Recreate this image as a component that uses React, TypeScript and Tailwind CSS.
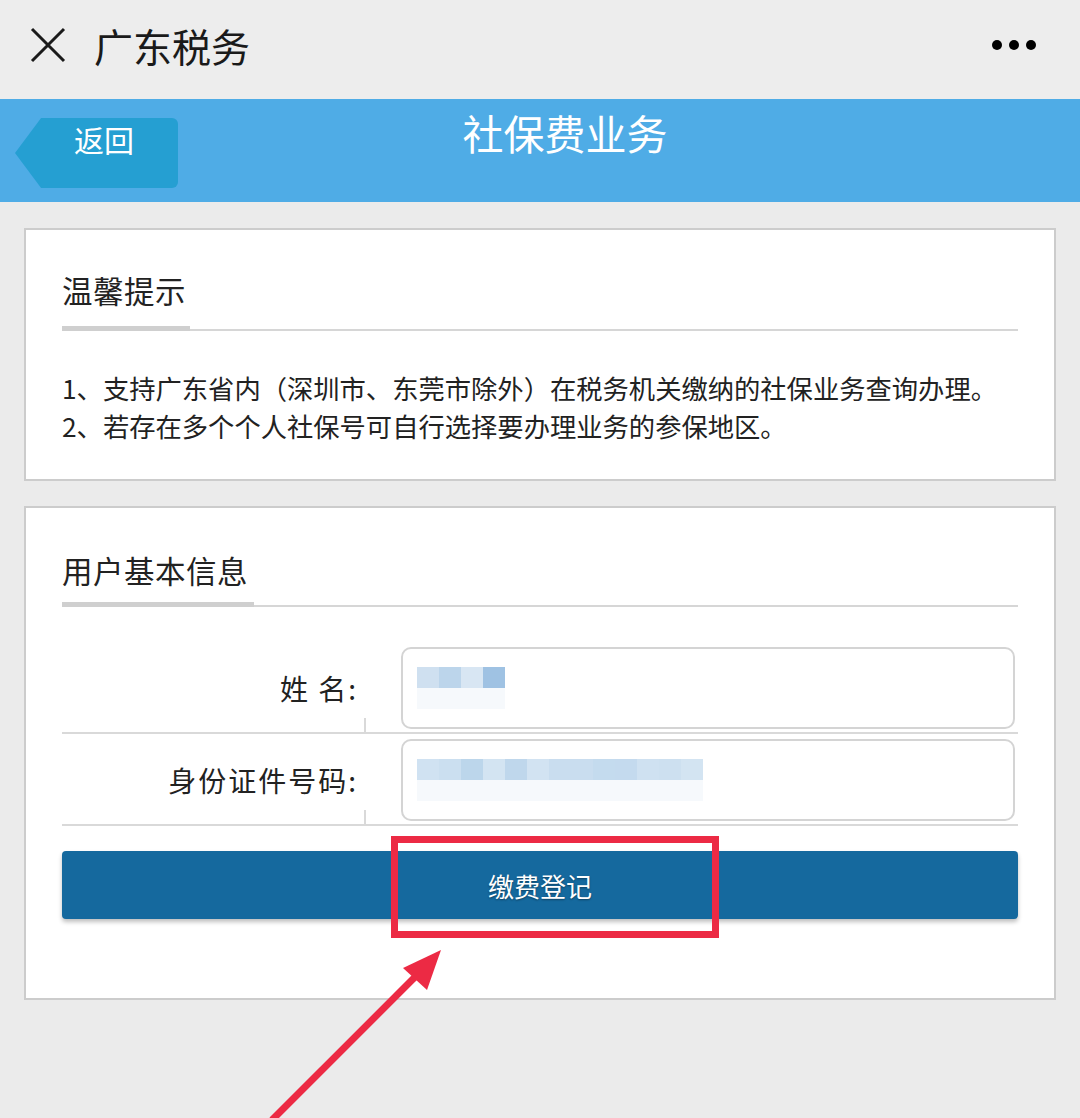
import React from 'react';

const font = { fontFamily: '"Noto Sans CJK SC", "Noto Sans", sans-serif' };

const SectionTitle: React.FC<{ title: string; barWidth: string; pb: string }> = ({ title, barWidth, pb }) => (
  <div className={`relative border-b-2 border-[#d6d6d6] ${pb}`}>
    <h2 className="text-[30.5px] leading-[40px] text-[#222] tracking-[0.5px]">{title}</h2>
    <div className={`absolute left-0 -bottom-[2px] h-[5px] bg-[#cfcfcf] ${barWidth}`} />
  </div>
);

const Blur: React.FC<{ cells: string[] }> = ({ cells }) => (
  <div className="flex flex-col">
    <div className="flex">
      {cells.map((c, i) => (
        <div key={i} className="w-[22px] h-[21px]" style={{ background: c }} />
      ))}
    </div>
    <div className="flex">
      {cells.map((_, i) => (
        <div key={i} className="w-[22px] h-[21px] bg-[#f6f9fc]" />
      ))}
    </div>
  </div>
);

const FieldRow: React.FC<{ label: string; cells: string[]; top: string }> = ({ label, cells, top }) => (
  <div className={`relative flex items-center border-b-2 border-[#d9d9d9] ${top} pb-[3px]`}>
    <div className="w-[296px] text-right text-[28px] tracking-[2px] text-[#222] -mr-[1px]">{label}</div>
    <div className="w-[44px]" />
    <div className="relative flex-1 h-[82px] mr-[3px] border-2 border-[#d4d4d4] rounded-[10px] bg-white flex items-center pl-[14px]">
      <Blur cells={cells} />
    </div>
    <div className="absolute left-[302px] bottom-0 w-[2px] h-[14px] bg-[#d9d9d9]" />
  </div>
);

export default function App() {
  return (
    <div className="w-[1080px] h-[1118px] bg-[#ebebeb] relative overflow-hidden" style={font}>
      {/* top bar */}
      <div className="h-[99px] bg-[#ededed] flex items-center px-[30px] pb-[9px]">
        <svg width="36" height="36" viewBox="0 0 36 36" className="mr-[28px]">
          <path d="M2 2 L34 34 M34 2 L2 34" stroke="#1a1a1a" strokeWidth="3" />
        </svg>
        <span className="text-[39px] text-[#1a1a1a] leading-none">广东税务</span>
        <div className="ml-auto flex gap-[7px] mr-[14px]">
          <span className="w-[10px] h-[10px] rounded-full bg-black" />
          <span className="w-[10px] h-[10px] rounded-full bg-black" />
          <span className="w-[10px] h-[10px] rounded-full bg-black" />
        </div>
      </div>

      {/* blue header */}
      <div className="relative h-[103px] bg-[#4facE6] flex items-center justify-center">
        <div className="absolute left-[15px] top-[19px] w-[163px] h-[70px] bg-[#259fd2] rounded-r-[6px] [clip-path:polygon(16%_0,100%_0,100%_100%,16%_100%,0_50%)]">
          <span className="absolute left-[59px] top-[1px] text-[30px] text-white leading-[40px]">返回</span>
        </div>
        <h1 className="text-[41px] text-white leading-none -mt-[36px] ml-[50px]">社保费业务</h1>
      </div>

      <div className="px-[24px] pt-[26px] flex flex-col gap-[25px]">
        {/* tips */}
        <div className="bg-white border-2 border-[#cccccc] px-[36px] pt-[40px] h-[253px]">
          <SectionTitle title="温馨提示" barWidth="w-[128px]" pb="pb-[19px]" />
          <div className="mt-[38px] text-[26.3px] leading-[38px] text-[#222]">
            <p>1、支持广东省内（深圳市、东莞市除外）在税务机关缴纳的社保业务查询办理。</p>
            <p>2、若存在多个个人社保号可自行选择要办理业务的参保地区。</p>
          </div>
        </div>

        {/* user info */}
        <div className="bg-white border-2 border-[#cccccc] px-[36px] pt-[42px] h-[494px]">
          <SectionTitle title="用户基本信息" barWidth="w-[192px]" pb="pb-[15px]" />
          <FieldRow
            label="姓 名:"
            top="mt-[40px]"
            cells={['#cfe0f0', '#bcd5eb', '#d8e6f3', '#9fc2e3']}
          />
          <FieldRow
            label="身份证件号码:"
            top="mt-[5px]"
            cells={['#d0e2f2', '#cbdff0', '#bcd6eb', '#d3e4f2', '#bfd7ec', '#d2e3f2', '#c9ddef', '#c9ddef', '#c4dbee', '#c4daee', '#cfe1f1', '#cde0f0', '#d3e4f2']}
          />
          <button className="mt-[25px] w-full h-[68px] rounded-[4px] bg-[#15699e] text-white text-[26px] shadow-[0_3px_4px_rgba(0,0,0,0.25)] [text-shadow:0_1px_2px_rgba(0,0,0,0.4)]">
            缴费登记
          </button>
        </div>
      </div>

      {/* annotation overlay */}
      <div className="absolute left-[391px] top-[836px] w-[328px] h-[102px] border-[7px] border-[#ec2a44]" />
      <svg className="absolute left-0 top-0" width="1080" height="1118" viewBox="0 0 1080 1118">
        <line x1="272" y1="1120" x2="418" y2="974" stroke="#ec2a44" strokeWidth="7" />
        <polygon points="441,950 403,968 427,990" fill="#ec2a44" />
      </svg>
    </div>
  );
}
